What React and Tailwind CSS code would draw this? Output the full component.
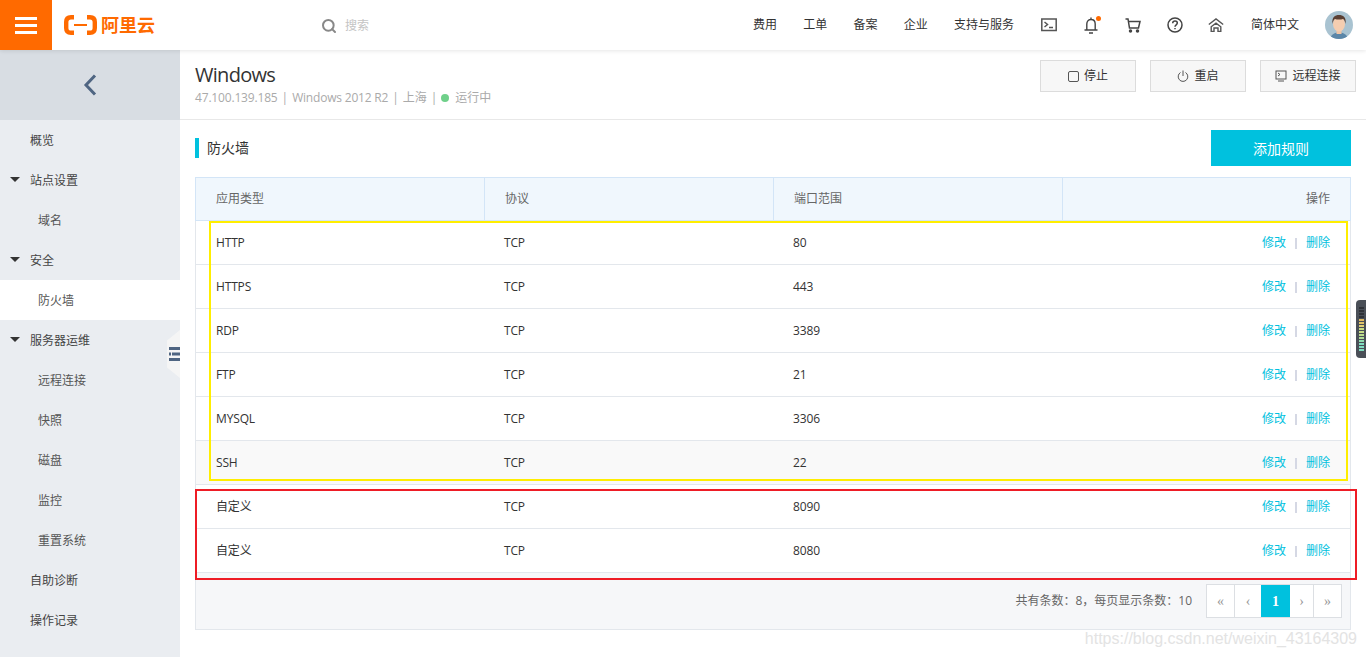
import { Search } from 'lucide-react'

const FONT = "font-['Open_Sans','Noto_Sans_CJK_SC',sans-serif]"

const navTop = ['费用', '工单', '备案', '企业', '支持与服务']

// 左侧菜单：level 0 一级，level 1 二级
const sideMenu = [
  { label: '概览', level: 0 },
  { label: '站点设置', level: 0, arrow: true },
  { label: '域名', level: 1 },
  { label: '安全', level: 0, arrow: true },
  { label: '防火墙', level: 1, active: true },
  { label: '服务器运维', level: 0, arrow: true },
  { label: '远程连接', level: 1 },
  { label: '快照', level: 1 },
  { label: '磁盘', level: 1 },
  { label: '监控', level: 1 },
  { label: '重置系统', level: 1 },
  { label: '自助诊断', level: 0 },
  { label: '操作记录', level: 0 },
]

const rules = [
  { app: 'HTTP', port: '80' },
  { app: 'HTTPS', port: '443' },
  { app: 'RDP', port: '3389' },
  { app: 'FTP', port: '21' },
  { app: 'MYSQL', port: '3306' },
  { app: 'SSH', port: '22', hover: true },
  { app: '自定义', port: '8090' },
  { app: '自定义', port: '8080' },
]

// 音量条每一格的颜色，从上到下
const meter = [
  'bg-[#2f3238]', 'bg-[#2f3238]', 'bg-[#2f3238]', 'bg-[#2f3238]',
  'bg-[#e0b860]', 'bg-[#e0c46a]', 'bg-[#e0cf75]',
  'bg-[#c7dc85]', 'bg-[#c7dc85]', 'bg-[#bbdc8d]', 'bg-[#b0dc96]',
  'bg-[#8fdcb0]', 'bg-[#7fdcc0]', 'bg-[#7fdcc0]', 'bg-[#7fdcc0]',
]

function Logo() {
  return (
    <div className="flex items-center">
      <svg width="33" height="20" viewBox="0 0 33 20" fill="none">
        <path d="M10 2.200H7C4 2.200 2.200 4 2.200 7v6c0 3 1.800 4.800 4.800 4.800h3" stroke="#ff6a00" strokeWidth="4.400" />
        <path d="M23 2.200h3c3 0 4.800 1.800 4.800 4.800v6c0 3-1.800 4.800-4.800 4.800h-3" stroke="#ff6a00" strokeWidth="4.400" />
        <path d="M10 10h13" stroke="#ff6a00" strokeWidth="2" />
      </svg>
      <span className="ml-[4px] text-[18px] leading-none font-bold text-[#ff6a00]">阿里云</span>
    </div>
  )
}

function TerminalIcon() {
  return (
    <svg width="16" height="14" viewBox="0 0 16 14" fill="none" stroke="#555" strokeWidth="1.500">
      <rect x="0.800" y="1" width="14.400" height="11.500" />
      <path d="M3.500 4l3 2.500-3 2.500M8 9.500h4" />
    </svg>
  )
}

function BellIcon() {
  return (
    <div className="relative">
      <svg width="14" height="17" viewBox="0 0 14 17" fill="none" stroke="#444" strokeWidth="1.400">
        <path d="M7 0.500v2M2.800 12.500V7C2.800 4.200 4.600 2.500 7 2.500s4.200 1.700 4.200 4.500v5.500M0.500 13h13M5 16h4" />
      </svg>
      <span className="absolute -top-[1px] -right-[3px] h-[5px] w-[5px] rounded-full bg-[#ff6a00]" />
    </div>
  )
}

function CartIcon() {
  return (
    <svg width="16" height="15" viewBox="0 0 16 15" fill="none" stroke="#444" strokeWidth="1.500">
      <path d="M0.500 1h2.500l1.500 9h9L15 3.500H3.300" />
      <circle cx="5.500" cy="13" r="1" fill="#444" />
      <circle cx="12.500" cy="13" r="1" fill="#444" />
    </svg>
  )
}

function HelpIcon() {
  return (
    <svg width="16" height="16" viewBox="0 0 16 16" fill="none" stroke="#444" strokeWidth="1.500">
      <circle cx="8" cy="8" r="7" />
      <path d="M5.700 6.200C5.800 4.800 6.800 4.100 8 4.100c1.300 0 2.300.8 2.300 2 0 1.800-2.300 1.700-2.300 3.600" />
      <path d="M8 11v1.300" />
    </svg>
  )
}

function HomeIcon() {
  return (
    <svg width="16" height="14" viewBox="0 0 16 14" fill="none" stroke="#555" strokeWidth="1.400">
      <path d="M0.800 6.500L8 1l7.200 5.500" />
      <path d="M3.200 8.800L8 5.200l4.800 3.600V13.500H10V10H6v3.500H3.200z" />
    </svg>
  )
}

function Avatar() {
  return (
    <svg width="28" height="28" viewBox="0 0 28 28">
      <defs>
        <clipPath id="avatarClip">
          <circle cx="14" cy="14" r="14" />
        </clipPath>
      </defs>
      <g clipPath="url(#avatarClip)">
        <rect width="28" height="28" fill="#a9c3d1" />
        <path d="M5 28c1-5 5-6.500 9-6.500S22 23 23 28z" fill="#5b86a8" />
        <rect x="11.500" y="17" width="5" height="6" fill="#eec4a6" />
        <ellipse cx="14" cy="13" rx="6" ry="7.500" fill="#f4cdb0" />
        <path d="M7.500 13C6.500 6 10 4 14 4s7.500 2 6.500 9c-.5-3-1.500-4.500-2.500-5-2 .8-6 .8-8 0-1 .5-2 2-2.500 5z" fill="#5a4034" />
      </g>
    </svg>
  )
}

function Header() {
  return (
    <header className="relative z-10 flex h-[50px] items-center bg-white shadow-[0_1px_4px_rgba(0,0,0,0.1)]">
      <div className="flex h-[50px] w-[52px] shrink-0 flex-col items-center justify-center gap-[4px] bg-[#ff6a00]">
        <span className="h-[3px] w-[22px] bg-white" />
        <span className="h-[3px] w-[22px] bg-white" />
        <span className="h-[3px] w-[22px] bg-white" />
      </div>
      <div className="ml-[12px] w-[257px] shrink-0">
        <Logo />
      </div>
      <Search size={16} strokeWidth={3} className="mt-[1px] text-[#888]" />
      <span className="mt-[2px] ml-[8px] text-[12px] text-[#c4c4c4]">搜索</span>
      <nav className="ml-auto flex items-center text-[12px] text-[#333]">
        <div className="flex gap-[26.250px]">
          {navTop.map((t) => (
            <span key={t}>{t}</span>
          ))}
        </div>
        <div className="ml-[27px]"><TerminalIcon /></div>
        <div className="ml-[27px]"><BellIcon /></div>
        <div className="ml-[27px]"><CartIcon /></div>
        <div className="ml-[26px]"><HelpIcon /></div>
        <div className="ml-[25px]"><HomeIcon /></div>
        <span className="ml-[27px]">简体中文</span>
        <div className="mr-[13px] ml-[26px]"><Avatar /></div>
      </nav>
    </header>
  )
}

function Sidebar() {
  return (
    <aside className="relative h-[607px] w-[180px] shrink-0 bg-[#eaedf1]">
      <div className="flex h-[70px] items-center justify-center bg-[#d8dde3]">
        <svg width="14" height="22" viewBox="0 0 14 22" fill="none" stroke="#4f6582" strokeWidth="3">
          <path d="M12 1.500L3 11l9 9.500" />
        </svg>
      </div>
      {sideMenu.map((m) => (
        <div
          key={m.label}
          className={`relative flex h-[40px] items-center pt-[2px] text-[12px] ${m.level === 0 ? 'pl-[30px] text-[#444]' : 'pl-[38px] text-[#555]'} ${m.active ? 'bg-white' : ''}`}
        >
          {m.arrow && (
            <span className="absolute top-[17px] left-[10px] h-0 w-0 border-x-[5px] border-t-[5px] border-x-transparent border-t-[#333]" />
          )}
          {m.label}
        </div>
      ))}
      {/* 收起菜单的小把手 */}
      <div className="absolute top-[280px] right-0 flex h-[48px] w-[13px] items-center justify-end bg-[#f5f5f5] [clip-path:polygon(100%_0,100%_100%,0_78%,0_22%)]">
        <svg width="11" height="14" viewBox="0 0 11 14" fill="#4f6582">
          <rect x="0" y="0" width="11" height="3" />
          <rect x="3" y="5.500" width="8" height="3" />
          <rect x="0" y="5.500" width="2" height="3" />
          <rect x="0" y="11" width="11" height="3" />
        </svg>
      </div>
    </aside>
  )
}

function TopButton({ icon, children }) {
  return (
    <button className="flex h-[32px] w-[96px] items-center justify-center gap-[5px] border border-[#dcdcdc] bg-[#f7f7f7] text-[12px] text-[#333]">
      {icon}
      {children}
    </button>
  )
}

function RuleRow({ rule }) {
  return (
    <div className={`flex h-[44px] items-center border-b border-[#e3e7ec] text-[12px] tracking-[-0.15px] text-[#333] ${rule.hover ? 'bg-[#f9f9f9]' : ''}`}>
      <div className="w-[289px] pl-[20px]">{rule.app}</div>
      <div className="w-[289px] pl-[19px]">TCP</div>
      <div className="w-[289px] pl-[19px]">{rule.port}</div>
      <div className="flex flex-1 items-center justify-end pt-[1px] pr-[20px] tracking-normal">
        <span className="text-[#00c1de]">修改</span>
        <span className="mx-[9px] h-[11px] w-[2px] bg-[#d5d8e4]" />
        <span className="text-[#00c1de]">删除</span>
      </div>
    </div>
  )
}

function Pager() {
  const cell = 'flex h-[32px] items-center justify-center border-r border-[#dcdfe3] bg-white text-[14px] text-[#999]'
  return (
    <div className="flex border-y border-l border-[#dcdfe3] font-['Liberation_Serif',serif]">
      <span className={`${cell} w-[28px]`}>«</span>
      <span className={`${cell} w-[26px] border-r-0`}>‹</span>
      <span className="flex h-[32px] w-[29px] items-center justify-center bg-[#00c1de] text-[14px] font-bold text-white">1</span>
      <span className={`${cell} w-[24px]`}>›</span>
      <span className={`${cell} w-[28px]`}>»</span>
    </div>
  )
}

function FirewallTable() {
  const th = 'flex h-[42px] w-[289px] items-center border-r border-[#d3e5f7] pl-[20px]'
  return (
    <div className="mt-[11px] border border-[#e3e7ec] border-t-0">
      <div className="-mx-px flex h-[44px] border border-[#d3e5f7] bg-[#f0f7fd] text-[12px] text-[#666]">
        <div className={th}>应用类型</div>
        <div className={th}>协议</div>
        <div className={th}>端口范围</div>
        <div className="flex flex-1 items-center justify-end pr-[20px]">操作</div>
      </div>
      {rules.map((r, i) => (
        <RuleRow key={i} rule={r} />
      ))}
      <div className="flex h-[56px] items-center justify-end bg-[#f6f7f9] pr-[8px]">
        <span className="mr-[14px] text-[12px] text-[#666]">共有条数：8，每页显示条数：10</span>
        <Pager />
      </div>
    </div>
  )
}

export default function App() {
  return (
    <div className={`relative h-[657px] w-[1366px] overflow-hidden bg-white ${FONT}`}>
      <Header />
      <div className="flex">
        <Sidebar />
        <main className="min-w-0 flex-1">
          <div className="flex h-[70px] items-start justify-between border-b border-[#e8e8e8] pt-[10px] pr-[10px] pl-[15px]">
            <div>
              <h1 className="text-[20px] leading-[30px] tracking-[-0.7px] text-[#333]">Windows</h1>
              <p className="flex items-center text-[12px] leading-[16px] text-[#aaa]">
                <span className="tracking-[-0.17px]">47.100.139.185</span>
                <span className="mx-[4px]">|</span>
                <span className="tracking-[-0.2px]">Windows 2012 R2</span>
                <span className="mx-[4px]">|</span>
                上海
                <span className="mx-[4px]">|</span>
                <span className="mr-[6px] h-[8px] w-[8px] rounded-full bg-[#6fd08a]" />
                运行中
              </p>
            </div>
            <div className="flex gap-[14px]">
              <TopButton icon={<span className="h-[11px] w-[11px] rounded-[2px] border border-[#555]" />}>停止</TopButton>
              <TopButton
                icon={
                  <svg width="12" height="12" viewBox="0 0 12 12" fill="none" stroke="#555">
                    <path d="M3.500 2.500a4.800 4.800 0 1 0 5 0M6 0.500V6" />
                  </svg>
                }
              >
                重启
              </TopButton>
              <TopButton
                icon={
                  <svg width="12" height="12" viewBox="0 0 12 12" fill="none" stroke="#555">
                    <rect x="1" y="1" width="10" height="8" />
                    <path d="M3 3l2 1.500L3 6M3 11h6" />
                  </svg>
                }
              >
                远程连接
              </TopButton>
            </div>
          </div>
          <div className="pr-[15px] pl-[15px]">
            <div className="flex h-[46px] items-end justify-between">
              <div className="mb-[8px] border-l-4 border-[#00c1de] pl-[8px] text-[14px] leading-[20px] text-[#333]">防火墙</div>
              <button className="h-[36px] w-[140px] bg-[#00c1de] text-[14px] text-white">添加规则</button>
            </div>
            <FirewallTable />
          </div>
        </main>
      </div>

      {/* 截图上的标注框 */}
      <div className="absolute top-[221px] left-[209px] h-[260px] w-[1139px] border-2 border-[#ffee00]" />
      <div className="absolute top-[489px] left-[195px] h-[91px] w-[1162px] border-2 border-[#ee1c25]" />

      {/* 浮动音量条 */}
      <div className="absolute top-[300px] right-0 flex h-[58px] w-[10px] flex-col gap-[1px] rounded-l-[4px] bg-[#4a4f57] pt-[7px] pl-[3px]">
        {meter.map((c, i) => (
          <span key={i} className={`h-[2px] w-[5px] ${c}`} />
        ))}
      </div>

      {/* 水印 */}
      <span className="absolute top-[629px] right-[9px] font-['Liberation_Sans',sans-serif] text-[16px] leading-[20px] text-[#e3e3e3]">
        https://blog.csdn.net/weixin_43164309
      </span>
    </div>
  )
}
